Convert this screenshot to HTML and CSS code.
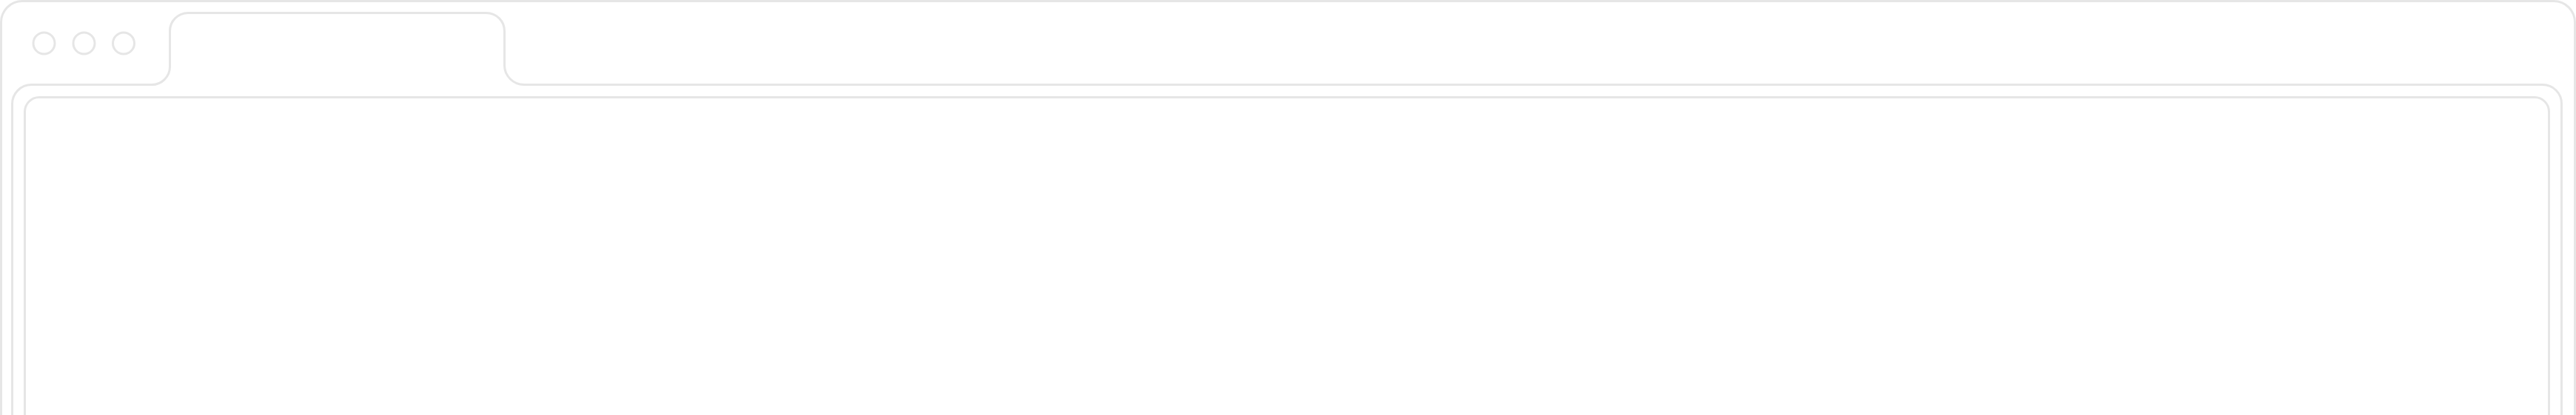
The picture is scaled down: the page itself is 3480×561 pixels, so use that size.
FILE: index.html
```html
<!DOCTYPE html>
<html lang="en">
<head>
<meta charset="utf-8">
<title>Browser window wireframe</title>
<link rel="stylesheet" href="styles.css">
</head>
<body>
<div class="frame">
  <svg class="frame-art" viewBox="0 0 3480 561" width="3480" height="561" aria-hidden="true">
    <g class="stroke">
      <path d="M1.5,561 V30 A28.5,28.5 0 0 1 30,1.5 H3450 A28.5,28.5 0 0 1 3478.5,30 V561"/>
      <path d="M16.5,561 V140.5 A26,26 0 0 1 42.5,114.5 H205 A24.5,24.5 0 0 0 229.5,90 V42 A24.5,24.5 0 0 1 254,17.5 H657 A24.5,24.5 0 0 1 681.5,42 V88 A26.5,26.5 0 0 0 708,114.5 H3435 A25.5,25.5 0 0 1 3460.5,140 V561"/>
      <path d="M33.5,561 V151 A19.5,19.5 0 0 1 53,131.5 H3424 A19.5,19.5 0 0 1 3443.5,151 V561"/>
      <circle cx="59.5" cy="58.5" r="14.5"/>
      <circle cx="113.5" cy="58.5" r="14.5"/>
      <circle cx="167" cy="58.5" r="14.5"/>
    </g>
  </svg>
</div>
</body>
</html>
```

FILE: styles.css
```css
html, body {
  margin: 0;
  padding: 0;
  background: #ffffff;
  font-family: "Liberation Sans", Arial, sans-serif;
}

.frame {
  width: 3480px;
  height: 561px;
  overflow: hidden;
}

.frame-art {
  display: block;
}

.stroke {
  fill: none;
  stroke: #e6e6e6;
  stroke-width: 3;
}
```
